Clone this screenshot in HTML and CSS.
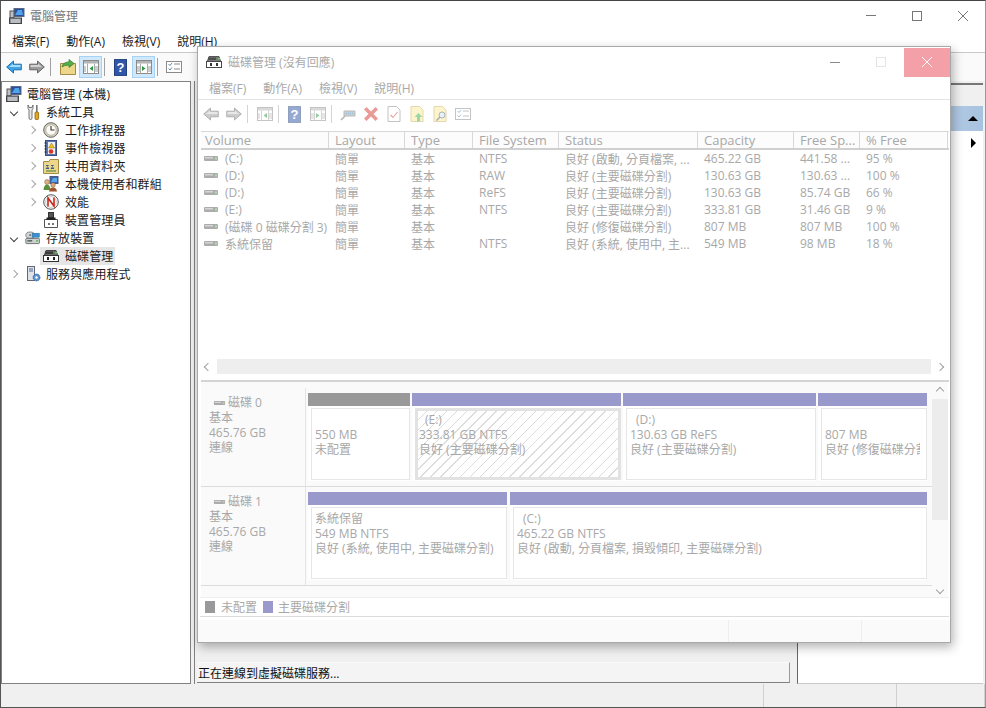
FILE: index.html

```html
<!DOCTYPE html>
<html>
<head>
    <meta charset="utf-8">
    <title>電腦管理</title>
    <link rel="stylesheet" href="styles.css">
</head>
<body>
    <!-- icon sprite -->
    <svg class="sprite" xmlns="http://www.w3.org/2000/svg">
        <symbol id="i-computer" viewBox="0 0 16 16">
            <rect x="5" y="0.5" width="10" height="8" fill="#2b4f9e" stroke="#5a6a80"/>
            <path d="M6 7 L9 2 L13 2 L14 7 Z" fill="#4fa3e8"/>
            <rect x="1" y="3" width="4" height="7" fill="#b9c0c8" stroke="#555"/>
            <rect x="0.5" y="10" width="12" height="5.5" fill="#8d949c" stroke="#444"/>
            <path d="M2 12h9M2 14h9" stroke="#e6e6e6"/>
        </symbol>
        <symbol id="i-tools" viewBox="0 0 16 16">
            <path d="M3 1 L3 4.5 L4 6 L4 14 Q4 15.5 5.5 15.5 Q7 15.5 7 14 L7 6 L8 4.5 L8 1 L6.8 3.5 L4.2 3.5 Z" fill="#e8e8e8" stroke="#555" stroke-width="0.8"/>
            <rect x="11" y="1" width="1.6" height="7" fill="#777"/>
            <rect x="10" y="8" width="3.6" height="7.5" rx="1" fill="#e2a51c" stroke="#8a6410" stroke-width="0.8"/>
        </symbol>
        <symbol id="i-clock" viewBox="0 0 16 16">
            <circle cx="8" cy="8" r="7.3" fill="#d8d2b8" stroke="#666"/>
            <circle cx="8" cy="8" r="5.2" fill="#fbfbf4" stroke="#999" stroke-width="0.6"/>
            <path d="M8 4v4h3.5" fill="none" stroke="#333" stroke-width="1.1"/>
        </symbol>
        <symbol id="i-log" viewBox="0 0 16 16">
            <rect x="2.5" y="0.5" width="11" height="15" fill="#5b79b8" stroke="#38507f"/>
            <rect x="5" y="2" width="7" height="12" fill="#eef0f4"/>
            <path d="M8.5 3 L11.5 8 L5.5 8 Z" fill="#f0c020" stroke="#927410" stroke-width="0.5"/>
            <circle cx="8" cy="11.5" r="2.3" fill="#d8352a"/>
            <path d="M1.5 3h2M1.5 6h2M1.5 9h2M1.5 12h2" stroke="#222"/>
        </symbol>
        <symbol id="i-share" viewBox="0 0 16 16">
            <path d="M0.5 3.5 L0.5 15.5 L15.5 15.5 L15.5 1.5 L7 1.5 L6 3.5 Z" fill="#ecd68a" stroke="#a38b45"/>
            <path d="M3 7h3l-2 2.5h2v1.5H2.5l2-3H3zM8 7h3l-2 2.5h2v1.5H7.5l2-3H8z" fill="#3a5c8a"/>
            <path d="M3 13h10" stroke="#7a9a50" stroke-width="1.5"/>
        </symbol>
        <symbol id="i-users" viewBox="0 0 16 16">
            <rect x="7" y="0.5" width="8" height="7" fill="#3c62b0" stroke="#4a5a7a"/>
            <path d="M8 6 L10 2 L14 2 L14 6 Z" fill="#56a8ea"/>
            <circle cx="4" cy="6" r="2.4" fill="#e0b183" stroke="#7a5a40" stroke-width="0.5"/>
            <path d="M0.5 14 Q1 8.5 4 8.5 Q7 8.5 7.5 14 Z" fill="#5a8f3c"/>
            <circle cx="10" cy="9" r="2.3" fill="#dba878" stroke="#7a5a40" stroke-width="0.5"/>
            <path d="M6 15.5 Q6.5 11.5 10 11.5 Q13.5 11.5 14 15.5 Z" fill="#a0522d"/>
        </symbol>
        <symbol id="i-perf" viewBox="0 0 16 16">
            <circle cx="8" cy="8" r="7.3" fill="#fbfbfb" stroke="#555"/>
            <circle cx="8" cy="8" r="5.4" fill="none" stroke="#bbb" stroke-width="0.7"/>
            <path d="M5 12.5 V4 L11 12 V3.5" fill="none" stroke="#c8281e" stroke-width="1.6"/>
        </symbol>
        <symbol id="i-device" viewBox="0 0 16 16">
            <rect x="5.5" y="0.5" width="5" height="5" fill="#555" stroke="#333"/>
            <path d="M1.5 7.5h13v8h-13z" fill="#fff" stroke="#555"/>
            <rect x="3.5" y="5.5" width="9" height="2.5" fill="#222"/>
            <rect x="5" y="11" width="2" height="2" fill="#777"/>
            <rect x="9" y="11" width="2" height="2" fill="#777"/>
        </symbol>
        <symbol id="i-storage" viewBox="0 0 20 16">
            <ellipse cx="6.5" cy="4.5" rx="5.5" ry="4" fill="#cfd4d8" stroke="#777"/>
            <circle cx="6.5" cy="4.5" r="1.4" fill="#7a8088"/>
            <rect x="9" y="2" width="9" height="5" fill="#3a8fd0" stroke="#2a6a9a" stroke-width="0.6"/>
            <rect x="1" y="8.5" width="17" height="6.5" rx="1" fill="#cdd0d0" stroke="#5a5a5a"/>
            <rect x="3" y="10.5" width="6" height="2" fill="#5f6a60"/>
            <rect x="14" y="10.5" width="2" height="2" fill="#4cc24c"/>
        </symbol>
        <symbol id="i-disk" viewBox="0 0 16 14">
            <path d="M3 1.5 h10 l2 6 H1z" fill="#6e6e6e" stroke="#444"/>
            <rect x="0.5" y="6.5" width="15" height="6" fill="#fff" stroke="#333"/>
            <rect x="2" y="2.5" width="8" height="2.5" fill="#3c3c3c"/>
            <rect x="12" y="3" width="2" height="1.5" fill="#4cd04c"/>
            <rect x="4" y="8" width="2" height="3" fill="#222"/>
            <rect x="10" y="8" width="2" height="3" fill="#222"/>
        </symbol>
        <symbol id="i-services" viewBox="0 0 16 16">
            <rect x="2.5" y="0.5" width="7" height="14" fill="#dfe3e8" stroke="#667"/>
            <path d="M4 3h4M4 5h4" stroke="#4a6a9a"/>
            <circle cx="11.5" cy="11.5" r="3.4" fill="#5e94d0" stroke="#2e5a90" stroke-dasharray="1.4 0.8"/>
            <circle cx="11.5" cy="11.5" r="1.2" fill="#fff"/>
        </symbol>
        <symbol id="i-back" viewBox="0 0 16 14">
            <path d="M0.7 7 L7.5 1 V4.2 H15.3 V9.8 H7.5 V13 Z" fill="#3fa4e6" stroke="#1c6fb0"/>
            <path d="M3 7 L7 3.8 V5 H14.5 V7 Z" fill="#a6dcfb"/>
        </symbol>
        <symbol id="i-forward" viewBox="0 0 16 14">
            <path d="M15.3 7 L8.5 1 V4.2 H0.7 V9.8 H8.5 V13 Z" fill="#9b9b9b" stroke="#666"/>
            <path d="M13 7 L9 3.8 V5 H1.5 V7 Z" fill="#d2d2d2"/>
        </symbol>
        <symbol id="i-back-gray" viewBox="0 0 16 14">
            <path d="M0.7 7 L7.5 1 V4.2 H15.3 V9.8 H7.5 V13 Z" fill="#9b9b9b" stroke="#666"/>
            <path d="M3 7 L7 3.8 V5 H14.5 V7 Z" fill="#d2d2d2"/>
        </symbol>
        <symbol id="i-up" viewBox="0 0 16 16">
            <path d="M0.5 4.5 L0.5 15.5 L15.5 15.5 L15.5 4.5 Z" fill="#ecd68a" stroke="#a38b45"/>
            <path d="M2 8 Q3 3 9 3 V0.5 L14 4.5 L9 8.5 V6 Q4 6 2 8 Z" fill="#53b04a" stroke="#2c7a28" stroke-width="0.7"/>
        </symbol>
        <symbol id="i-pane-left" viewBox="0 0 16 14">
            <rect x="0.5" y="0.5" width="15" height="13" fill="#fff" stroke="#8a8a8a"/>
            <rect x="1" y="1" width="14" height="2.5" fill="#b4b4b4"/>
            <path d="M1 9h2M1 11h2M1 7h2M12 7h3M12 9h3M12 11h3" stroke="#9a9a9a"/>
            <path d="M4.5 3.5v10M11.5 3.5v10" stroke="#aaa"/>
            <path d="M10 6 L6.5 8.5 L10 11 Z" fill="#2c9a40"/>
        </symbol>
        <symbol id="i-pane-right" viewBox="0 0 16 14">
            <rect x="0.5" y="0.5" width="15" height="13" fill="#fff" stroke="#8a8a8a"/>
            <rect x="1" y="1" width="14" height="2.5" fill="#b4b4b4"/>
            <path d="M1 7h3M1 9h3M1 11h3M12 7h3M12 9h3M12 11h3" stroke="#9a9a9a"/>
            <path d="M4.5 3.5v10M11.5 3.5v10" stroke="#aaa"/>
            <path d="M6 6 L9.5 8.5 L6 11 Z" fill="#2c9a40"/>
        </symbol>
        <symbol id="i-help" viewBox="0 0 14 18">
            <rect x="0.5" y="0.5" width="13" height="17" fill="#2f56a8" stroke="#1a3876"/>
            <text x="7" y="14" font-family="Liberation Sans" font-weight="700" font-size="14" text-anchor="middle" fill="#fff">?</text>
        </symbol>
        <symbol id="i-list" viewBox="0 0 16 12">
            <rect x="0.5" y="0.5" width="15" height="11" fill="#fff" stroke="#8a8a8a"/>
            <path d="M2.5 3 L4 4.5 L6 2M2.5 7.5 L4 9 L6 6.5" fill="none" stroke="#5a8ab0"/>
            <path d="M8 3h6M8 8h6" stroke="#8a8a8a"/>
        </symbol>
        <symbol id="i-connect" viewBox="0 0 16 14">
            <path d="M1 13 L5 9" stroke="#6c6c6c" stroke-width="1.6"/>
            <path d="M4 4 H15 V9 H4Z" fill="#9aa0a6" stroke="#777"/>
            <path d="M6 6.5h7" stroke="#2f7fc0" stroke-width="1.4" stroke-dasharray="1 1"/>
        </symbol>
        <symbol id="i-x" viewBox="0 0 16 16">
            <path d="M1 3.5 L3.5 1 L8 5.5 L12.5 1 L15 3.5 L10.5 8 L15 12.5 L12.5 15 L8 10.5 L3.5 15 L1 12.5 L5.5 8 Z" fill="#d93a32"/>
        </symbol>
        <symbol id="i-doc" viewBox="0 0 14 16">
            <path d="M1 0.5 H9.5 L13 4 V15.5 H1 Z" fill="#fff" stroke="#888"/>
            <path d="M3.5 9 L6 11.5 L10.5 6" fill="none" stroke="#cc4a4a" stroke-width="1.1"/>
        </symbol>
        <symbol id="i-docup" viewBox="0 0 14 16">
            <path d="M1 0.5 H9.5 L13 4 V15.5 H1 Z" fill="#f8ea9c" stroke="#c9b25c"/>
            <path d="M8.5 7 L12.5 11 H10 V15.5 H7 V11 H4.5 Z" fill="#3ab04a"/>
        </symbol>
        <symbol id="i-docfind" viewBox="0 0 14 16">
            <path d="M1 0.5 H9.5 L13 4 V15.5 H1 Z" fill="#f8ea9c" stroke="#c9b25c"/>
            <circle cx="9" cy="9" r="3" fill="#cfe6f5" stroke="#667"/>
            <path d="M7 11 L3.5 14.5" stroke="#556" stroke-width="1.4"/>
        </symbol>
        <symbol id="i-bar" viewBox="0 0 14 5">
            <rect width="14" height="5" rx="1" fill="#8a8a8a"/>
            <rect x="1" y="1" width="8" height="1.5" fill="#c4c4c4"/>
            <rect x="11" y="1.5" width="2" height="2" fill="#8fd08f"/>
        </symbol>
    </svg>

    <div class="window">
        <div class="titlebar">
            <svg class="ico-title"><use href="#i-computer"/></svg>
            <span class="title-text">電腦管理</span>
            <div class="caption">
                <span class="cap-btn"><i class="cap-min"></i></span>
                <span class="cap-btn"><i class="cap-max"></i></span>
                <span class="cap-btn"><svg class="cap-x" viewBox="0 0 10 10"><path d="M0 0L10 10M10 0L0 10"/></svg></span>
            </div>
        </div>
        <div class="menubar">
            <span>檔案(F)</span><span>動作(A)</span><span>檢視(V)</span><span>說明(H)</span>
        </div>
        <div class="toolbar">
            <span class="tb"><svg class="i16"><use href="#i-back"/></svg></span>
            <span class="tb"><svg class="i16"><use href="#i-forward"/></svg></span>
            <span class="tb-sep"></span>
            <span class="tb"><svg class="i16"><use href="#i-up"/></svg></span>
            <span class="tb tb-on"><svg class="i16"><use href="#i-pane-left"/></svg></span>
            <span class="tb-sep"></span>
            <span class="tb"><svg class="i-help"><use href="#i-help"/></svg></span>
            <span class="tb tb-on"><svg class="i16"><use href="#i-pane-right"/></svg></span>
            <span class="tb-sep"></span>
            <span class="tb"><svg class="i16"><use href="#i-list"/></svg></span>
        </div>

        <div class="workspace">
            <div class="tree">
                <div class="node"><svg class="node-ico"><use href="#i-computer"/></svg>電腦管理 (本機)</div>
                <div class="node lv1"><b class="chev open"></b><svg class="node-ico"><use href="#i-tools"/></svg>系統工具</div>
                <div class="node lv2"><b class="chev"></b><svg class="node-ico"><use href="#i-clock"/></svg>工作排程器</div>
                <div class="node lv2"><b class="chev"></b><svg class="node-ico"><use href="#i-log"/></svg>事件檢視器</div>
                <div class="node lv2"><b class="chev"></b><svg class="node-ico"><use href="#i-share"/></svg>共用資料夾</div>
                <div class="node lv2"><b class="chev"></b><svg class="node-ico"><use href="#i-users"/></svg>本機使用者和群組</div>
                <div class="node lv2"><b class="chev"></b><svg class="node-ico"><use href="#i-perf"/></svg>效能</div>
                <div class="node lv2"><b class="chev none"></b><svg class="node-ico"><use href="#i-device"/></svg>裝置管理員</div>
                <div class="node lv1"><b class="chev open"></b><svg class="node-ico"><use href="#i-storage"/></svg>存放裝置</div>
                <div class="node lv2"><b class="chev none"></b><span class="selected"><svg class="node-ico"><use href="#i-disk"/></svg>磁碟管理</span></div>
                <div class="node lv1"><b class="chev"></b><svg class="node-ico"><use href="#i-services"/></svg>服務與應用程式</div>
            </div>
            <div class="center">
                <div class="center-status">正在連線到虛擬磁碟服務...</div>
            </div>
            <div class="actions">
                <div class="actions-head"></div>
                <div class="actions-blue"><i class="tri-up"></i></div>
                <div class="actions-more"><i class="tri-right"></i></div>
            </div>
        </div>

        <div class="statusbar">
            <span class="st-main"></span><span class="st-a"></span><span class="st-b"></span>
        </div>
    </div>

    <!-- the dialog floats over the main window -->
    <div class="dialog">
        <div class="titlebar dlg-title">
            <svg class="ico-dlg"><use href="#i-disk"/></svg>
            <span class="title-text">磁碟管理 (沒有回應)</span>
            <div class="caption dlg-caption">
                <span class="cap-btn"><i class="cap-min"></i></span>
                <span class="cap-btn"><i class="cap-max faint"></i></span>
                <span class="cap-btn cap-close"><svg class="cap-x" viewBox="0 0 10 10"><path d="M0 0L10 10M10 0L0 10"/></svg></span>
            </div>
        </div>
        <div class="menubar dlg-menu">
            <span>檔案(F)</span><span>動作(A)</span><span>檢視(V)</span><span>說明(H)</span>
        </div>
        <div class="toolbar dlg-tools">
            <span class="tb"><svg class="i16"><use href="#i-back-gray"/></svg></span>
            <span class="tb"><svg class="i16"><use href="#i-forward"/></svg></span>
            <span class="tb-sep"></span>
            <span class="tb"><svg class="i16"><use href="#i-pane-left"/></svg></span>
            <span class="tb-sep"></span>
            <span class="tb"><svg class="i-help"><use href="#i-help"/></svg></span>
            <span class="tb"><svg class="i16"><use href="#i-pane-right"/></svg></span>
            <span class="tb-sep"></span>
            <span class="tb"><svg class="i16"><use href="#i-connect"/></svg></span>
            <span class="tb"><svg class="i16"><use href="#i-x"/></svg></span>
            <span class="tb"><svg class="i16"><use href="#i-doc"/></svg></span>
            <span class="tb"><svg class="i16"><use href="#i-docup"/></svg></span>
            <span class="tb"><svg class="i16"><use href="#i-docfind"/></svg></span>
            <span class="tb"><svg class="i16"><use href="#i-list"/></svg></span>
        </div>

        <div class="volumes">
            <div class="vol-row vol-head">
                <span>Volume</span><span>Layout</span><span>Type</span><span>File System</span><span>Status</span><span>Capacity</span><span>Free Sp...</span><span>% Free</span>
            </div>
            <div class="vol-body">
                <div class="vol-row"><span><svg class="vol-ico"><use href="#i-bar"/></svg>(C:)</span><span>簡單</span><span>基本</span><span>NTFS</span><span>良好 (啟動, 分頁檔案, ...</span><span>465.22 GB</span><span>441.58 ...</span><span>95 %</span></div>
                <div class="vol-row"><span><svg class="vol-ico"><use href="#i-bar"/></svg>(D:)</span><span>簡單</span><span>基本</span><span>RAW</span><span>良好 (主要磁碟分割)</span><span>130.63 GB</span><span>130.63 ...</span><span>100 %</span></div>
                <div class="vol-row"><span><svg class="vol-ico"><use href="#i-bar"/></svg>(D:)</span><span>簡單</span><span>基本</span><span>ReFS</span><span>良好 (主要磁碟分割)</span><span>130.63 GB</span><span>85.74 GB</span><span>66 %</span></div>
                <div class="vol-row"><span><svg class="vol-ico"><use href="#i-bar"/></svg>(E:)</span><span>簡單</span><span>基本</span><span>NTFS</span><span>良好 (主要磁碟分割)</span><span>333.81 GB</span><span>31.46 GB</span><span>9 %</span></div>
                <div class="vol-row"><span><svg class="vol-ico"><use href="#i-bar"/></svg>(磁碟 0 磁碟分割 3)</span><span>簡單</span><span>基本</span><span></span><span>良好 (修復磁碟分割)</span><span>807 MB</span><span>807 MB</span><span>100 %</span></div>
                <div class="vol-row"><span><svg class="vol-ico"><use href="#i-bar"/></svg>系統保留</span><span>簡單</span><span>基本</span><span>NTFS</span><span>良好 (系統, 使用中, 主...</span><span>549 MB</span><span>98 MB</span><span>18 %</span></div>
            </div>
            <div class="hscroll">
                <i class="chev-left"></i><span class="hscroll-track"></span><i class="chev-right"></i>
            </div>
        </div>

        <div class="disks">
            <div class="disk-list">
                <div class="disk">
                    <div class="disk-info">
                        <div class="disk-name"><svg class="disk-ico"><use href="#i-bar"/></svg>磁碟 0</div>
                        <div>基本</div><div>465.76 GB</div><div>連線</div>
                    </div>
                    <div class="parts disk0">
                        <div class="part unalloc"><div class="part-box"><p>&nbsp;</p><p>550 MB</p><p>未配置</p></div></div>
                        <div class="part"><div class="part-box hatched"><p class="indent">(E:)</p><p>333.81 GB NTFS</p><p>良好 (主要磁碟分割)</p></div></div>
                        <div class="part"><div class="part-box"><p class="indent">(D:)</p><p>130.63 GB ReFS</p><p>良好 (主要磁碟分割)</p></div></div>
                        <div class="part"><div class="part-box"><p>&nbsp;</p><p>807 MB</p><p>良好 (修復磁碟分割)</p></div></div>
                    </div>
                </div>
                <div class="disk">
                    <div class="disk-info">
                        <div class="disk-name"><svg class="disk-ico"><use href="#i-bar"/></svg>磁碟 1</div>
                        <div>基本</div><div>465.76 GB</div><div>連線</div>
                    </div>
                    <div class="parts disk1">
                        <div class="part"><div class="part-box"><p>系統保留</p><p>549 MB NTFS</p><p>良好 (系統, 使用中, 主要磁碟分割)</p></div></div>
                        <div class="part"><div class="part-box"><p class="indent">(C:)</p><p>465.22 GB NTFS</p><p>良好 (啟動, 分頁檔案, 損毀傾印, 主要磁碟分割)</p></div></div>
                    </div>
                </div>
            </div>
            <div class="vscroll">
                <i class="chev-up"></i><span class="vscroll-thumb"></span><i class="chev-down"></i>
            </div>
        </div>

        <div class="legend">
            <i class="swatch gray"></i><span>未配置</span>
            <i class="swatch purple"></i><span>主要磁碟分割</span>
        </div>
        <div class="dlg-status">
            <span class="ds-main"></span><span class="ds-a"></span><span class="ds-b"></span>
        </div>
    </div>
</body>
</html>
```

FILE: styles.css

```css
* {
    box-sizing: border-box;
}

html, body {
    height: 100%;
}

body {
    margin: 0;
    position: relative;
    overflow: hidden;
    font-family: "Open Sans", "Noto Sans CJK TC", sans-serif;
    font-size: 12px;
    color: #1a1a1a;
    background-color: #fff;
}

.sprite {
    display: none;
}

svg {
    display: block;
    flex: none;
}

/* main window */
.window {
    display: flex;
    flex-direction: column;
    height: 708px;
    border-top: 1px solid #444;
    border-left: 1px solid #555;
    border-right: 1px solid #999;
    border-bottom: 1px solid #555;
}

.titlebar {
    display: flex;
    align-items: center;
    height: 29px;
    background-color: #fff;
}

.ico-title {
    width: 16px;
    height: 16px;
    margin-left: 8px;
    margin-right: 5px;
}

.title-text {
    color: #777;
}

.caption {
    display: flex;
    margin-left: auto;
    margin-right: -1px;
}

.cap-btn {
    display: flex;
    justify-content: center;
    align-items: center;
    width: 46px;
    height: 29px;
}

.cap-min {
    display: block;
    width: 10px;
    height: 1px;
    background-color: #777;
}

.cap-max {
    display: block;
    width: 10px;
    height: 10px;
    border: 1px solid #777;
}

.cap-max.faint {
    border-color: #e4e4e4;
}

.cap-x {
    width: 10px;
    height: 10px;
    stroke: #777;
    stroke-width: 1;
}

.menubar {
    display: flex;
    align-items: center;
    gap: 17px;
    height: 23px;
    padding-left: 11px;
    background-color: #fff;
    border-bottom: 1px solid #c8c8c8;
}

.toolbar {
    display: flex;
    align-items: center;
    height: 28px;
    padding-left: 1px;
    background-color: #fafafa;
}

.tb {
    display: flex;
    justify-content: center;
    align-items: center;
    width: 23px;
    height: 22px;
}

.tb-on {
    background-color: #cfe8fb;
    border: 1px solid #a5d3f5;
}

.tb-sep {
    width: 1px;
    height: 18px;
    margin: 0 4px 0 2px;
    background-color: #a0a0a0;
}

.tb:nth-child(2) + .tb-sep {
    margin-right: 5px;
}

.i16 {
    width: 16px;
    height: 16px;
}

.i-help {
    width: 13px;
    height: 17px;
}

.workspace {
    flex: 1;
    display: flex;
    min-height: 0;
    background-color: #f0f0f0;
}

.tree {
    width: 190px;
    padding-top: 3px;
    background-color: #fff;
    border: 1px solid #828282;
}

.node {
    display: flex;
    align-items: center;
    height: 18px;
    padding-left: 4px;
    letter-spacing: 0.1px;
    white-space: nowrap;
}

.node-ico {
    width: 16px;
    height: 16px;
    margin-right: 5px;
}

.node.lv1 {
    padding-left: 8px;
}

.node.lv2 {
    padding-left: 26px;
}

.lv1 .node-ico {
    margin-left: 3px;
}

.lv2 .node-ico {
    margin-left: 3px;
    margin-right: 6px;
}

.chev {
    display: block;
    width: 6px;
    height: 6px;
    margin: 0 5px 0 1px;
    border-top: 1.5px solid #a6a6a6;
    border-right: 1.5px solid #a6a6a6;
    transform: rotate(45deg);
}

.chev.open {
    border-color: #404040;
    transform: rotate(135deg);
}

.chev.none {
    border: 0;
}

.selected {
    display: flex;
    align-items: center;
    height: 18px;
    padding-right: 2px;
    background-color: #e6e6e6;
}

.selected .node-ico {
    width: 16px;
    height: 14px;
}

.center {
    display: flex;
    flex-direction: column;
    justify-content: flex-end;
    width: 596px;
    margin-left: 3px;
    padding: 0 0 1px 2px;
    border-left: 1px solid #808080;
}

.center-status {
    display: flex;
    align-items: center;
    height: 21px;
    padding-left: 1px;
    color: #111;
    background-color: #f4f4f4;
    border-top: 1px solid #fafafa;
    border-right: 1px solid #9a9a9a;
    border-bottom: 1px solid #808080;
}

.actions {
    flex: 1;
    margin: 2px 2px 0 7px;
    background-color: #fff;
    border-left: 1px solid #666;
    border-bottom: 1px solid #c8c8c8;
}

.actions-head {
    height: 23px;
    background-color: #f0f0f0;
    border-top: 2px solid #777;
}

.actions-blue {
    display: flex;
    justify-content: flex-end;
    align-items: center;
    height: 25px;
    padding-right: 5px;
    background: linear-gradient(to right, #dfe9f4, #a8c3e0);
}

.actions-more {
    display: flex;
    justify-content: flex-end;
    align-items: center;
    height: 24px;
    padding-right: 7px;
}

.tri-up {
    display: block;
    border-left: 5px solid transparent;
    border-right: 5px solid transparent;
    border-bottom: 5px solid #000;
}

.tri-right {
    display: block;
    border-top: 5px solid transparent;
    border-bottom: 5px solid transparent;
    border-left: 5px solid #000;
}

.statusbar {
    display: flex;
    height: 23px;
    background-color: #f0f0f0;
}

.st-main {
    width: 763px;
    border-right: 1px solid #d0d0d0;
}

.st-a {
    width: 133px;
    border-right: 1px solid #d0d0d0;
}

.st-b {
    flex: 1;
    border-right: 1px solid #d0d0d0;
}

/* the faded dialog on top */
.dialog {
    position: absolute;
    left: 197px;
    top: 46px;
    width: 754px;
    height: 597px;
    display: flex;
    flex-direction: column;
    color: #a8a8a8;
    background-color: #fff;
    border: 1px solid #a8a8a8;
    box-shadow: 2px 4px 10px rgba(0, 0, 0, 0.3);
}

.dialog .title-text {
    color: #aaa;
}

.dlg-title {
    height: 30px;
    flex: none;
}

.ico-dlg {
    width: 16px;
    height: 14px;
    margin-left: 8px;
    margin-right: 6px;
    opacity: 0.9;
}

.dlg-caption {
    margin-right: 0;
}

.cap-close {
    background-color: #f4a0a8;
}

.cap-close .cap-x {
    stroke: #fff;
}

.dlg-caption .cap-min {
    background-color: #8a8a8a;
}

.dlg-menu {
    flex: none;
    padding-left: 11px;
    border-bottom-color: #e4e4e4;
}

.dlg-tools {
    flex: none;
    background-color: #fff;
}

.dlg-tools .tb svg {
    opacity: 0.5;
}

.dlg-tools .tb-sep {
    background-color: #d4d4d4;
}

.volumes {
    flex: 1;
    display: flex;
    flex-direction: column;
    min-height: 0;
    margin: 3px 1px 0 3px;
    border-bottom: 2px solid #d4d4d4;
}

.vol-row {
    display: grid;
    grid-template-columns: 128px 76px 68px 86px 139px 96px 66px 88px;
    align-items: center;
    height: 17px;
    white-space: nowrap;
}

.vol-row span {
    display: flex;
    align-items: center;
    padding-left: 6px;
    overflow: hidden;
}

.vol-row span:first-child {
    padding-left: 3px;
}

.vol-head {
    height: 19px;
    font-size: 13px;
    border-top: 1px solid #d8d8d8;
    border-bottom: 2px solid #d0d0d0;
    background-color: #fcfcfc;
}

.vol-head span {
    height: 16px;
    border-right: 1px solid #d8d8d8;
}

.vol-head span:first-child {
    padding-left: 4px;
}

.vol-body {
    flex: 1;
}

.vol-ico {
    width: 14px;
    height: 5px;
    margin-right: 7px;
    opacity: 0.7;
}

.hscroll {
    display: flex;
    align-items: center;
    gap: 6px;
    height: 17px;
    margin-bottom: 5px;
    padding: 0 6px 0 4px;
}

.hscroll-track {
    flex: 1;
    height: 15px;
    background-color: #eee;
}

.chev-left, .chev-right, .chev-up, .chev-down {
    display: block;
    width: 6px;
    height: 6px;
    border-top: 1.5px solid #a0a0a0;
    border-right: 1.5px solid #a0a0a0;
}

.chev-left {
    transform: rotate(-135deg);
}

.chev-right {
    transform: rotate(45deg);
}

.chev-up {
    transform: rotate(-45deg);
}

.chev-down {
    margin-bottom: 4px;
    transform: rotate(135deg);
}

.disks {
    flex: none;
    display: flex;
    height: 215px;
    margin: 0 2px 0 3px;
    background-color: #fafafa;
}

.disk-list {
    flex: 1;
    padding-top: 6px;
}

.disk {
    display: flex;
    height: 99px;
    border-bottom: 1px solid #dcdcdc;
}

.disk-info {
    width: 105px;
    padding: 7px 0 0 8px;
    line-height: 15px;
    background-color: #fafafa;
    border-right: 1px solid #e4e4e4;
}

.disk-name {
    display: flex;
    align-items: center;
    height: 15px;
    padding-left: 4px;
}

.disk-ico {
    width: 13px;
    height: 4px;
    margin-right: 2px;
    opacity: 0.7;
}

.parts {
    flex: 1;
    display: grid;
    column-gap: 2px;
    height: 88px;
    margin: 5px 4px 0 2px;
}

.disk0 {
    grid-template-columns: 102px 209px 193px 109px;
}

.disk1 {
    grid-template-columns: 199px 417px;
    column-gap: 3px;
}

.part {
    display: flex;
    flex-direction: column;
    border-top: 13px solid #9999cc;
    padding: 2px 0 1px;
    background-color: #fff;
    overflow: hidden;
}

.part.unalloc {
    border-top-color: #999;
}

.part-box {
    flex: 1;
    padding: 3px 6px 0 3px;
    margin-left: 3px;
    border: 1px solid #e6e6e6;
    line-height: 15px;
    white-space: nowrap;
    overflow: hidden;
}

.part-box p {
    margin: 0;
    overflow: hidden;
}

.part-box .indent {
    padding-left: 6px;
}

.part-box.hatched {
    border: 3px solid #e2e2e2;
    padding: 1px 0 0 1px;
    background-image: repeating-linear-gradient(135deg, #fff 0, #fff 6px, #dcdcdc 6px, #dcdcdc 7px);
}

.vscroll {
    display: flex;
    flex-direction: column;
    align-items: center;
    width: 16px;
    padding-top: 6px;
}

.vscroll-thumb {
    width: 16px;
    height: 121px;
    margin: 5px 0 auto;
    background-color: #ececec;
}

.legend {
    flex: none;
    display: flex;
    align-items: center;
    height: 20px;
    margin: 0 1px 3px 2px;
    padding-left: 5px;
    border-top: 1px solid #efefef;
    border-bottom: 1px solid #dcdcdc;
}

.swatch {
    display: block;
    width: 10px;
    height: 12px;
    margin-right: 6px;
}

.swatch.gray {
    background-color: #999;
}

.swatch.purple {
    margin-left: 6px;
    margin-right: 5px;
    background-color: #9999cc;
}

.dlg-status {
    flex: 0 0 22px;
    display: flex;
    background-color: #fafafa;
}

.ds-main {
    width: 531px;
    border-right: 1px solid #eee;
}

.ds-a {
    width: 133px;
    border-right: 1px solid #eee;
}
```
